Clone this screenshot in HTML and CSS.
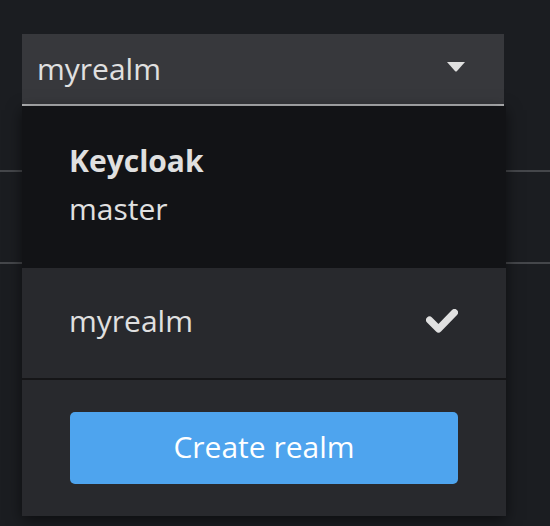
FILE: index.html
```html
<!DOCTYPE html>
<html lang="en">
<head>
<meta charset="utf-8">
<title>Realm selector</title>
<link rel="stylesheet" href="styles.css">
</head>
<body>
<div class="page">
  <div class="toolbar">
    <div class="select">
      <button class="toggle" type="button">
        <span class="toggle-text">myrealm</span>
        <svg class="caret" width="18" height="10" viewBox="0 0 18 10" aria-hidden="true">
          <path d="M0 0 H18 L9.8 9.2 Q9 10 8.2 9.2 Z" fill="#e0e0e0"/>
        </svg>
      </button>
      <div class="menu">
        <div class="group">
          <div class="group-title">Keycloak</div>
          <div class="group-item">master</div>
        </div>
        <div class="item">
          <span>myrealm</span>
          <svg class="check" width="32" height="24" viewBox="0 0 32 24" aria-hidden="true">
            <polyline points="3.5,11 12.5,20 28.5,3.5" fill="none" stroke="#e0e0e0" stroke-width="7" stroke-linecap="round" stroke-linejoin="round"/>
          </svg>
        </div>
        <div class="footer">
          <button class="primary" type="button">Create realm</button>
        </div>
      </div>
    </div>
  </div>
  <div class="table">
    <div class="row row-head"></div>
    <div class="row"></div>
  </div>
</div>
</body>
</html>
```
FILE: styles.css
```css
html, body {
  margin: 0;
  padding: 0;
  background: #1b1d21;
}
body {
  font-family: "Open Sans", "Noto Sans", sans-serif;
  font-size: 30px;
  color: #e0e0e0;
  height: 526px;
  overflow: hidden;
}
.page {
  padding-top: 34px;
}
.toolbar {
  padding-left: 22px;
}
.select {
  position: relative;
  width: 482px;
}
.toggle {
  display: flex;
  align-items: center;
  justify-content: space-between;
  width: 100%;
  height: 72px;
  margin: 0;
  padding: 13px 39px 14px 15px;
  box-sizing: border-box;
  background: #37383c;
  border: 0;
  border-bottom: 2px solid #b4b5b7;
  font: inherit;
  color: #e0e0e0;
  line-height: 45px;
  text-align: left;
}
.caret {
  display: block;
  margin-top: -4px;
}
.menu {
  position: absolute;
  top: 100%;
  left: 0;
  width: 484px;
  background: #28292d;
  box-shadow: 0 4px 14px rgba(0, 0, 0, 0.55);
  z-index: 2;
}
.group {
  background: #121316;
  padding: 31px 48px 35px 47px;
  line-height: 48px;
}
.group-title {
  font-weight: 700;
}
.item {
  display: flex;
  align-items: center;
  justify-content: space-between;
  padding: 29px 48px 33px 47px;
  line-height: 48px;
}
.check {
  display: block;
}
.footer {
  border-top: 2px solid #151517;
  padding: 32px 48px;
}
.primary {
  display: block;
  width: 100%;
  margin: 0;
  padding: 12px 0 15px;
  border: 0;
  border-radius: 5px;
  background: #4ea4ee;
  color: #ffffff;
  font: inherit;
  line-height: 45px;
  text-align: center;
}
.table {
  margin: 0;
}
.row {
  height: 90px;
  border-bottom: 2px solid #45474b;
}
.row-head {
  height: 64px;
}
```
